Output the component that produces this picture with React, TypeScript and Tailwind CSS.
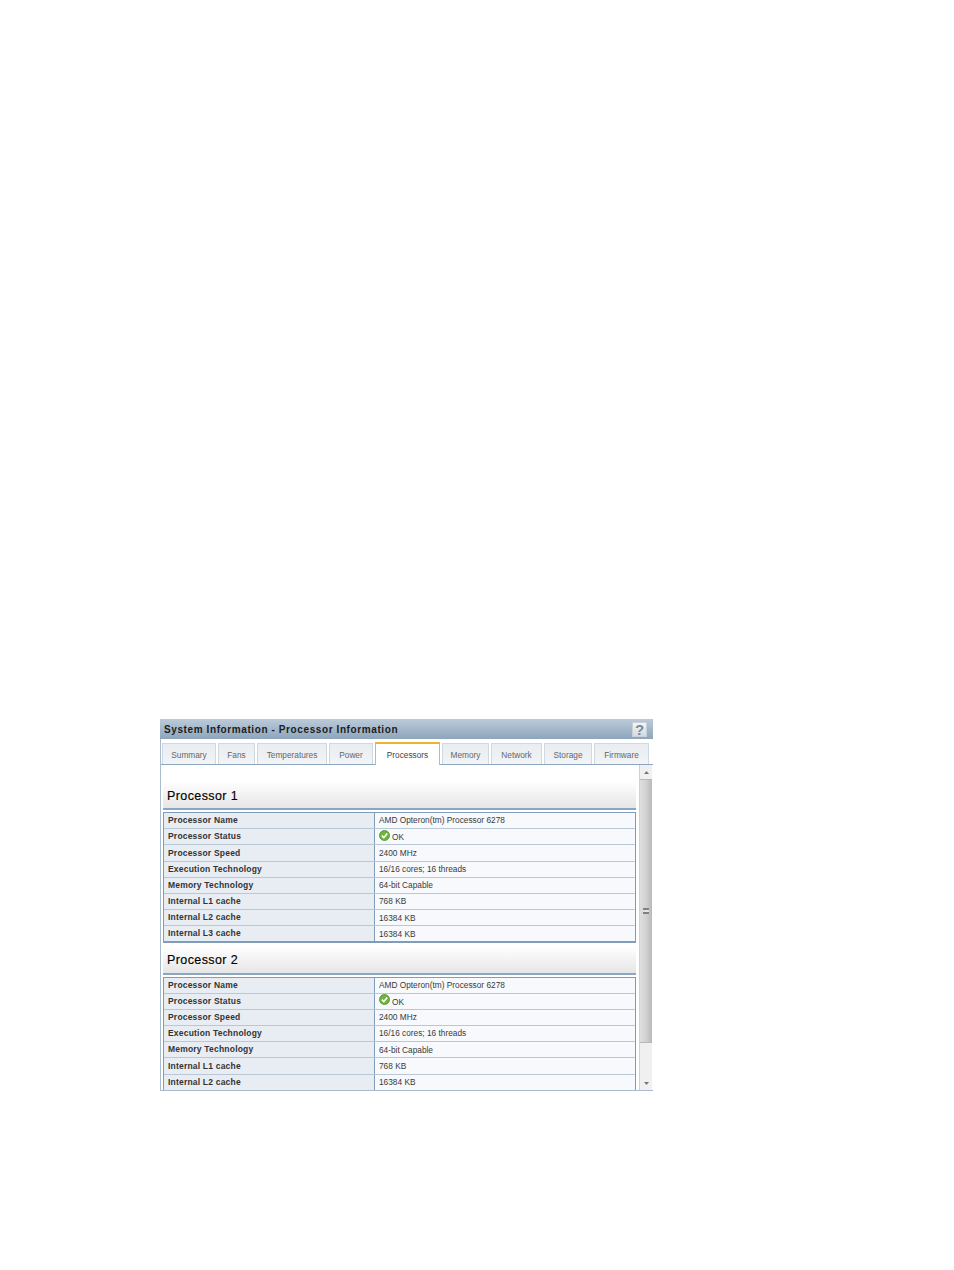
const sans = "font-['Liberation_Sans',Arial,sans-serif]";

const rows1: [string, string][] = [
  ["Processor Name", "AMD Opteron(tm) Processor 6278"],
  ["Processor Status", "OK"],
  ["Processor Speed", "2400 MHz"],
  ["Execution Technology", "16/16 cores; 16 threads"],
  ["Memory Technology", "64-bit Capable"],
  ["Internal L1 cache", "768 KB"],
  ["Internal L2 cache", "16384 KB"],
  ["Internal L3 cache", "16384 KB"],
];

const tabs = [
  { name: "Summary", w: "w-[54px]" },
  { name: "Fans", w: "w-[37px]" },
  { name: "Temperatures", w: "w-[70px]" },
  { name: "Power", w: "w-[44px]" },
  { name: "Processors", w: "w-[65px]", active: true },
  { name: "Memory", w: "w-[47px]" },
  { name: "Network", w: "w-[51px]" },
  { name: "Storage", w: "w-[48px]" },
  { name: "Firmware", w: "w-[55px]" },
];

function OkIcon() {
  return (
    <svg width="11" height="11" viewBox="0 0 11 11" className="shrink-0">
      <circle cx="5.5" cy="5.5" r="5" fill="#6fb53a" stroke="#4d8f2a" strokeWidth="0.8" />
      <path d="M2.8 5.6 L4.8 7.6 L8.3 3.4" fill="none" stroke="#ffffff" strokeWidth="1.6" />
    </svg>
  );
}

function Section({ title, rows }: { title: string; rows: [string, string][] }) {
  return (
    <div>
      <div className="h-[29px] ml-[2px] w-[473px] flex items-center pl-[4px] pt-[3px] bg-gradient-to-b from-white to-[#e6e6e6] border-b-2 border-[#8ba6c0]">
        <span className="text-[12.5px] leading-none tracking-[0.4px] text-black [-webkit-text-stroke:0.15px_#000000]">{title}</span>
      </div>
      <div className="ml-[2px] mt-[2px] w-[473px] border border-[#7f9cb8] border-b-2">
        {rows.map(([label, value], i) => (
          <div key={label} className={`flex ${i < rows.length - 1 ? "h-[16.2px] border-b border-[#b9c7d6]" : "h-[15px]"}`}>
            <div className="w-[211px] shrink-0 bg-[#e8edf3] border-r border-[#7f9cb8] pl-[4px] flex items-center text-[8.5px] font-bold tracking-[0.2px] text-[#333333]">
              {label}
            </div>
            <div className="flex-1 bg-[#f7f9fc] pl-[4px] flex items-center gap-[2px] text-[8.3px] text-[#3a3a3a]">
              {value === "OK" ? (
                <>
                  <span className="-mt-[3px]">
                    <OkIcon />
                  </span>
                  <span className="mt-[1px]">OK</span>
                </>
              ) : (
                value
              )}
            </div>
          </div>
        ))}
      </div>
    </div>
  );
}

export default function App() {
  return (
    <div className={`w-[954px] h-[1270px] bg-white pt-[719px] pl-[160px] ${sans}`}>
      <div className="w-[493px] h-[372px] border-l border-b border-[#a9bccd] flex flex-col">
        <div className="h-[20px] shrink-0 -ml-px bg-gradient-to-b from-[#bccbda] to-[#8da5bc] flex items-center justify-between pl-[4px] pr-[6px]">
          <span className="text-[10px] font-bold tracking-[0.6px] text-[#1c1c1c]">System Information - Processor Information</span>
          <span className="w-[15px] h-[15px] bg-gradient-to-b from-[#f5f5f5] to-[#d5d9de] border border-[#c9d0d8] flex items-center justify-center text-[15px] font-bold leading-none text-[#6f8ea8]">
            ?
          </span>
        </div>
        <div className="h-[26px] shrink-0 flex items-end pl-[1px] gap-[2px] border-b border-[#8ba6c0]">
          {tabs.map((t) =>
            t.active ? (
              <div
                key={t.name}
                className={`${t.w} h-[23px] -mb-px pt-[2px] bg-white border-t-2 border-t-[#f0b030] border-x border-x-[#a9bccd] flex items-center justify-center text-[8.3px] text-[#444444]`}
              >
                {t.name}
              </div>
            ) : (
              <div
                key={t.name}
                className={`${t.w} h-[21px] pt-[2px] bg-gradient-to-b from-[#e9edf1] to-[#f2f4f6] border-t border-x border-[#d0d8e0] flex items-center justify-center text-[8.3px] text-[#666666]`}
              >
                {t.name}
              </div>
            )
          )}
        </div>
        <div className="flex-1 min-h-0 flex">
          <div className="flex-1 min-w-0 overflow-hidden pt-[16px]">
            <Section title="Processor 1" rows={rows1} />
            <div className="h-[2.2px]" />
            <Section title="Processor 2" rows={rows1.slice(0, 7)} />
          </div>
          <div className="w-[13px] mr-[1px] shrink-0 bg-[#f0f0f0] border-l border-[#d0d0d0] flex flex-col items-center">
            <div className="h-[14px] flex items-center justify-center">
              <svg width="5" height="3" viewBox="0 0 5 3"><path d="M2.5 0 L5 3 L0 3 Z" fill="#777777" /></svg>
            </div>
            <div className="w-full h-[264px] bg-gradient-to-r from-[#dedede] via-[#d2d2d2] to-[#b8b8b8] border-y border-[#b8b8b8] flex items-center justify-center">
              <div className="w-[6px] h-[6px] border-y-2 border-[#808080] bg-[#e4e4e4]" />
            </div>
            <div className="flex-1" />
            <div className="h-[14px] flex items-center justify-center">
              <svg width="5" height="3" viewBox="0 0 5 3"><path d="M0 0 L5 0 L2.5 3 Z" fill="#777777" /></svg>
            </div>
          </div>
        </div>
      </div>
    </div>
  );
}
